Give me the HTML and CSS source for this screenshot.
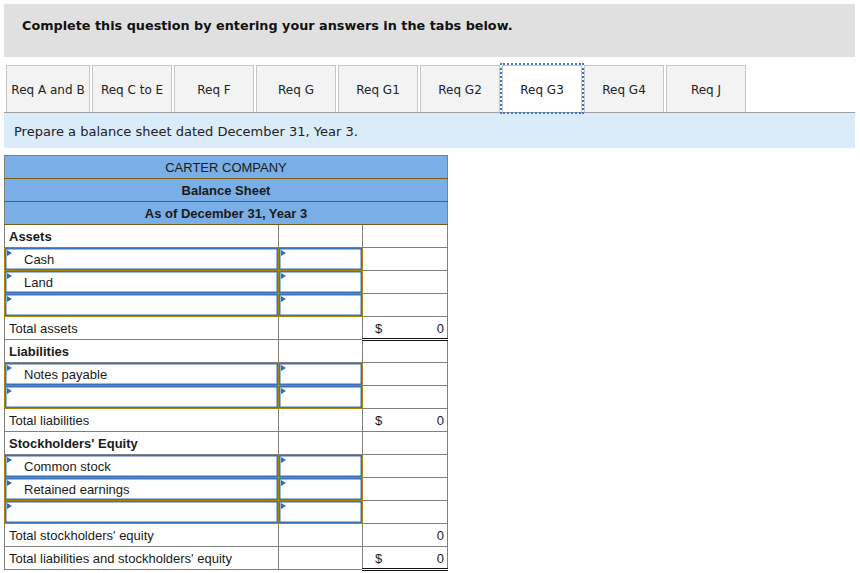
FILE: index.html
```html
<!DOCTYPE html>
<html>
<head>
<meta charset="utf-8">
<link rel="stylesheet" href="styles.css">
</head>
<body>
<div class="page">
  <div class="banner">Complete this question by entering your answers in the tabs below.</div>
  <div class="tabs">
    <div class="tab first">Req A and B</div>
    <div class="tab">Req C to E</div>
    <div class="tab">Req F</div>
    <div class="tab">Req G</div>
    <div class="tab">Req G1</div>
    <div class="tab">Req G2</div>
    <div class="tab active">Req G3</div>
    <div class="tab">Req G4</div>
    <div class="tab">Req J</div>
  </div>
  <div class="instr">Prepare a balance sheet dated December 31, Year 3.</div>
  <table class="bs">
    <colgroup><col class="c1"><col class="c2"><col class="c3"></colgroup>
    <tr class="hd"><td colspan="3">CARTER COMPANY</td></tr>
    <tr class="hd b"><td colspan="3">Balance Sheet</td></tr>
    <tr class="hd b"><td colspan="3">As of December 31, Year 3</td></tr>
    <tr><td class="sec">Assets</td><td></td><td></td></tr>
    <tr><td class="in ind"><span class="tri"></span>Cash</td><td class="in"><span class="tri"></span></td><td></td></tr>
    <tr><td class="in ind"><span class="tri"></span>Land</td><td class="in"><span class="tri"></span></td><td></td></tr>
    <tr><td class="in"><span class="tri"></span></td><td class="in"><span class="tri"></span></td><td></td></tr>
    <tr><td>Total assets</td><td class="sum"></td><td class="amt dbl"><span class="dol">$</span><span>0</span></td></tr>
    <tr><td class="sec">Liabilities</td><td></td><td></td></tr>
    <tr><td class="in ind"><span class="tri"></span>Notes payable</td><td class="in"><span class="tri"></span></td><td></td></tr>
    <tr><td class="in"><span class="tri"></span></td><td class="in"><span class="tri"></span></td><td></td></tr>
    <tr><td>Total liabilities</td><td class="sum"></td><td class="amt"><span class="dol">$</span><span>0</span></td></tr>
    <tr><td class="sec">Stockholders' Equity</td><td></td><td></td></tr>
    <tr><td class="in ind"><span class="tri"></span>Common stock</td><td class="in"><span class="tri"></span></td><td></td></tr>
    <tr><td class="in ind"><span class="tri"></span>Retained earnings</td><td class="in"><span class="tri"></span></td><td></td></tr>
    <tr><td class="in"><span class="tri"></span></td><td class="in"><span class="tri"></span></td><td></td></tr>
    <tr><td>Total stockholders' equity</td><td class="sum"></td><td class="amt"><span class="dol"></span><span>0</span></td></tr>
    <tr><td>Total liabilities and stockholders' equity</td><td></td><td class="amt top dbl"><span class="dol">$</span><span>0</span></td></tr>
  </table>
</div>
</body>
</html>
```
FILE: styles.css
```css
html, body {
  margin: 0;
  padding: 0;
  background: #ffffff;
}
.page {
  padding: 4px 5px 0 4px;
  font-family: "DejaVu Sans", Verdana, sans-serif;
  color: #1a1a1a;
}
.banner {
  background: #e0e0e0;
  height: 53px;
  box-sizing: border-box;
  padding: 12px 0 0 18px;
  line-height: 20px;
  font-weight: bold;
  font-size: 12.8px;
  color: #111;
}
.tabs {
  margin-top: 8px;
  display: flex;
  gap: 2px;
  padding-left: 2px;
  border-bottom: 1px solid #a0a0a0;
}
.tab {
  width: 80px;
  height: 47px;
  box-sizing: border-box;
  border: 1px solid #c6c6c6;
  border-bottom: none;
  background: #f3f3f3;
  display: flex;
  align-items: center;
  justify-content: center;
  padding-top: 2px;
  font-size: 12px;
  color: #222;
  white-space: nowrap;
}
.tab.first {
  width: 84px;
}
.tab.active {
  background: #ffffff;
  outline: 2px dotted #3f78c0;
  outline-offset: 0px;
  position: relative;
  z-index: 1;
}
.instr {
  background: #daebf9;
  height: 35px;
  display: flex;
  align-items: center;
  padding: 2px 0 0 10px;
  box-sizing: border-box;
  font-size: 13px;
  color: #222;
}
.bs {
  margin-top: 7px;
  border-collapse: collapse;
  width: 443px;
  table-layout: fixed;
  font-family: "Liberation Sans", Arial, sans-serif;
  font-size: 13px;
  color: #1a1a1a;
}
.bs col.c1 { width: 274px; }
.bs col.c2 { width: 84px; }
.bs col.c3 { width: 85px; }
.bs td {
  border: 1px solid #808080;
  height: 23px;
  box-sizing: border-box;
  padding: 1px 0 0 4px;
  position: relative;
  white-space: nowrap;
}
.bs tr.hd td {
  background: #7aaee6;
  text-align: center;
  border-left: 1px solid #808080;
  border-right: 1px solid #808080;
  border-top: 1px solid #7a5c10;
  border-bottom: 1px solid #7a5c10;
  padding: 1px 0 0 0;
}
.bs tr.hd:first-child td {
  border-top: 1px solid #808080;
}
.bs tr.hd.b td {
  font-weight: bold;
}
.bs td.sec {
  font-weight: bold;
}
.bs td.in {
  border: 1px solid #a8860c;
  box-shadow: inset 0 0 0 1.5px #3c73b8;
}
.bs td.ind {
  padding-left: 19px;
}
.tri {
  position: absolute;
  left: 2px;
  top: 2px;
  width: 0;
  height: 0;
  border-top: 3px solid transparent;
  border-bottom: 3px solid transparent;
  border-left: 5px solid #2a6fc2;
}
.bs td.sum {
  border-top: 1px solid #111;
}
.bs td.amt {
  padding: 1px 3px 0 12px;
}
.bs td.amt span {
  display: inline-block;
}
.bs td.amt .dol {
  width: 10px;
}
.bs td.amt span:last-child {
  float: right;
}
.bs td.dbl {
  border-bottom: 3px double #111;
}
.bs td.top {
  border-top: 1px solid #111;
}
```
